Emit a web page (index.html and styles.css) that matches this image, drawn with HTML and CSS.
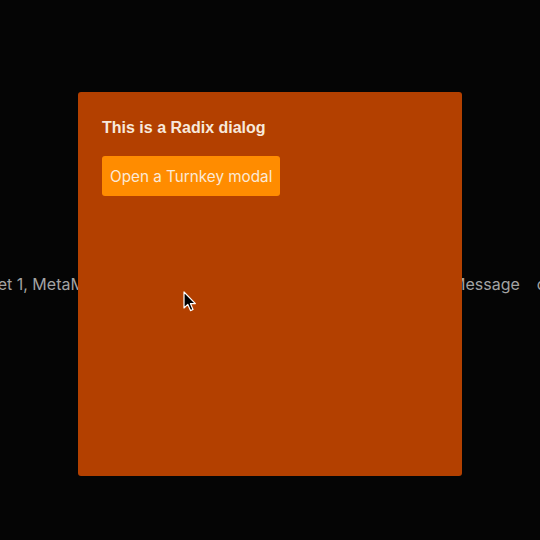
FILE: index.html
```html
<!DOCTYPE html>
<html>
<head>
<meta charset="utf-8">
<link rel="stylesheet" href="styles.css">
</head>
<body>
<div class="page">
  <div class="row">
    <span class="item">Wallet 1, MetaMask</span>
    <span class="item">Sign Message</span>
    <span class="item">connect</span>
  </div>
</div>
<div class="overlay">
  <div class="dialog">
    <h2 class="title">This is a Radix dialog</h2>
    <button class="btn">Open a Turnkey modal</button>
  </div>
</div>
<svg class="cursor" width="14" height="22" viewBox="0 0 14 22">
  <path d="M1 1 L1 17 L4.8 13.4 L7.5 19.6 L10 18.5 L7.4 12.6 L12.4 12.6 Z" fill="#000" stroke="#fff" stroke-width="1.2" stroke-linejoin="round"/>
</svg>
</body>
</html>
```
FILE: styles.css
```css
html, body {
  margin: 0;
  padding: 0;
  width: 540px;
  height: 540px;
  background: #050505;
  overflow: hidden;
}
.page {
  height: 540px;
  display: flex;
  align-items: center;
  overflow: hidden;
}
.row {
  display: flex;
  gap: 17px;
  margin-left: -34px;
  margin-top: 28px;
  white-space: nowrap;
  font-family: Inter, "Noto Sans", sans-serif;
  font-size: 16px;
  color: #a3a3a3;
}
.item:nth-child(2) {
  margin-left: 285px;
}
.overlay {
  position: absolute;
  inset: 0;
  display: flex;
  justify-content: center;
  padding-top: 92px;
}
.dialog {
  width: 384px;
  height: 384px;
  box-sizing: border-box;
  padding: 24px;
  background: #b34000;
  border-radius: 3px;
  display: flex;
  flex-direction: column;
  align-items: flex-start;
}
.title {
  margin: 2px 0 18px;
  font-family: "Liberation Sans", Arial, sans-serif;
  font-weight: bold;
  font-size: 16px;
  line-height: 20px;
  color: #f7e9dc;
}
.btn {
  height: 40px;
  padding: 0 8px;
  border: none;
  border-radius: 3px;
  background: #ff8c00;
  color: #fbe9d6;
  font-family: Inter, "Noto Sans", sans-serif;
  font-size: 15.25px;
}
.cursor {
  position: absolute;
  left: 183px;
  top: 291px;
}
```
